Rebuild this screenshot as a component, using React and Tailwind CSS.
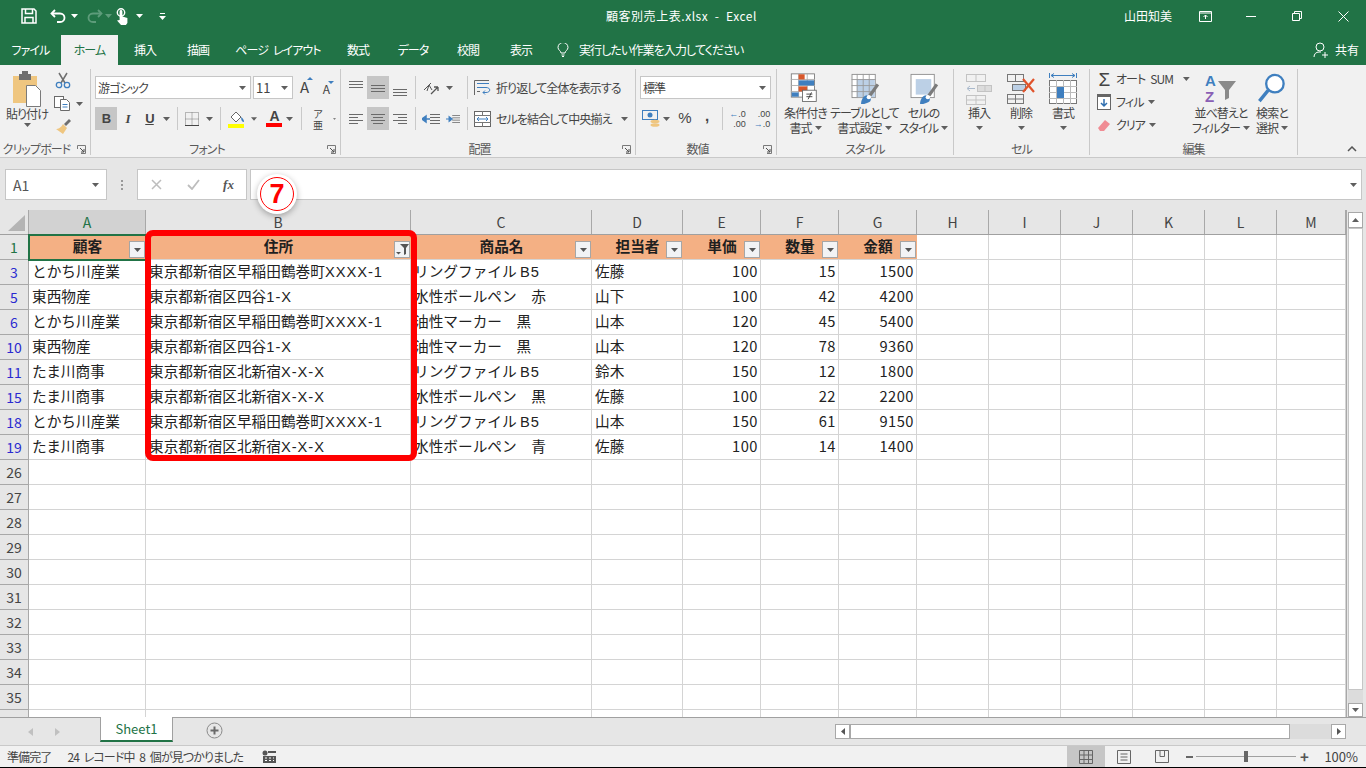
import React from "react";

const COLS = "grid grid-cols-[29px_117px_265px_181px_91px_78px_78px_78px_72px_72px_72px_72px_72px_69px]";
const LINE = "border-r border-b border-[#d4d4d4]";
const PALT = " [font-feature-settings:'palt'] tracking-[-0.9px] [word-spacing:3px] ";
const Car = ({ c = "#5f5f5f" }) => (
  <svg width="7" height="4" viewBox="0 0 7 4"><path d="M0 0h7L3.5 4z" fill={c} /></svg>
);
const S = ({ c = "", children }) => <div className={"flex items-center justify-center shrink-0 h-full " + c}>{children}</div>;
const Sep = ({ c = "h-[23px]" }) => <div className={"w-px shrink-0 bg-[#c9c9c9] " + c} />;

const Launcher = () => (
  <div className="w-[17px] shrink-0 flex items-center justify-center">
    <svg width="9" height="9" viewBox="0 0 9 9" fill="none" stroke="#7a7a7a"><path d="M.5 4V.5H8.500V8.500H4" /><path d="M3 3l4 4M7 4v3H4" stroke="#4f4f4f" /></svg>
  </div>
);

const Group = ({ w, label, launcher, children }) => (
  <div className={"flex flex-col h-[86px] shrink-0 border-r border-[#c9c9c9] " + w}>
    <div className="flex-1 min-h-0">{children}</div>
    <div className="flex h-[12px] items-center text-[12px] leading-none text-[#5a5a5a]">
      <div className="flex-1 text-center whitespace-nowrap">{label}</div>
      {launcher && <Launcher />}
    </div>
  </div>
);

const Lines = ({ ys, xs }) => (
  <svg width="16" height="16" viewBox="0 0 16 16" stroke="#6a6a6a" fill="none">
    {ys.map((y, i) => <path key={i} d={`M${xs[i][0]} ${y + .5}H${xs[i][1]}`} />)}
  </svg>
);
const full = [[1, 15], [1, 15], [1, 15]];
const AlignV = ({ top }) => <Lines ys={[top, top + 3, top + 6]} xs={full} />;
const AlignL = () => <Lines ys={[3, 6, 9, 12]} xs={[[1, 15], [1, 10], [1, 15], [1, 10]]} />;
const AlignC = () => <Lines ys={[3, 6, 9, 12]} xs={[[1, 15], [3, 13], [1, 15], [3, 13]]} />;
const AlignR = () => <Lines ys={[3, 6, 9, 12]} xs={[[1, 15], [6, 15], [1, 15], [6, 15]]} />;
const Indent = ({ flip }) => (
  <svg width="18" height="16" viewBox="0 0 18 16" fill="none">
    <path d="M8 3.500h10M8 6.500h10M8 9.500h10M8 12.500h10" stroke="#6a6a6a" />
    <path d={flip ? "M0 8h4M4 5l4 3-4 3z" : "M3 8h5M4 5L0 8l4 3z"} stroke="#3f7fbf" strokeWidth="1.500" fill="#3f7fbf" />
  </svg>
);

const BigBtn = ({ w, icon, l1, l2, caret = true }) => (
  <div className={"flex flex-col items-center shrink-0 mt-[3px] " + w}>
    <div className="h-[33px] flex items-center justify-center">{icon}</div>
    <div className="text-[12px] leading-[15px] text-[#444] whitespace-nowrap text-center">{l1}</div>
    <div className="text-[12px] leading-[15px] text-[#444] whitespace-nowrap flex items-center justify-center gap-[3px] h-[15px]">{l2}{caret && <Car />}</div>
  </div>
);

const CondIcon = () => (
  <svg width="31" height="33" viewBox="0 0 36 37" fill="none">
    <rect x="1.500" y="1.500" width="27" height="27" fill="#fff" stroke="#777" />
    <path d="M1 8h28M1 15h28M1 22h28M10 1v28M20 1v28" stroke="#aaa" />
    <rect x="10" y="2" width="7" height="6" fill="#d8572a" /><rect x="10" y="9" width="18" height="6" fill="#3f7fbf" />
    <rect x="10" y="16" width="10" height="6" fill="#d8572a" /><rect x="2" y="23" width="8" height="5" fill="#3f7fbf" />
    <rect x="14.500" y="20.500" width="16" height="13" fill="#fff" stroke="#666" />
    <path d="M19 25h7M19 28h7M25 23l-4 8" stroke="#333" />
  </svg>
);
const Brush = () => (
  <>
    <path d="M22 26l10-14 3 2-9 13z" fill="#7b7b7b" />
    <path d="M14 36c0-6 4-11 8-10 3 1 4 4 3 6-1 2-6 4-11 4z" fill="#3f7fbf" />
    <circle cx="23" cy="28" r="2.500" fill="#fff" />
  </>
);
const TableIcon = () => (
  <svg width="31" height="32" viewBox="0 0 36 37" fill="none">
    <rect x="3.500" y="1.500" width="27" height="27" fill="#fff" stroke="#888" />
    <rect x="9" y="7" width="21" height="21" fill="#bcd0e6" />
    <path d="M3 7.500h28M3 14.500h28M3 21.500h28M9.500 1v28M16.500 1v28M23.500 1v28" stroke="#999" />
    <Brush />
  </svg>
);
const StyleIcon = () => (
  <svg width="31" height="32" viewBox="0 0 36 37" fill="none">
    <rect x="3.500" y="1.500" width="27" height="27" fill="#fff" stroke="#888" />
    <rect x="9" y="7" width="18" height="18" fill="#bcd0e6" />
    <Brush />
  </svg>
);
const InsertIcon = () => (
  <svg width="28" height="32" viewBox="0 0 28 32" fill="none" stroke="#c3c3c3">
    <rect x="1.500" y="1.500" width="19" height="7" /><path d="M11 1v8" />
    <rect x="1.500" y="22.500" width="19" height="9" /><path d="M11 22v10M1 27h20" />
    <rect x="12.500" y="12.500" width="14" height="6" fill="#dcdcdc" /><path d="M20 12v7" />
    <path d="M10 15.500H3M5 13l-3 2.500L5 18" stroke="#a9b9cc" />
  </svg>
);
const DeleteIcon = () => (
  <svg width="30" height="32" viewBox="0 0 30 32" fill="none">
    <rect x="1.500" y="1.500" width="16" height="7" stroke="#777" /><path d="M9.500 1v8" stroke="#777" />
    <rect x="1.500" y="21.500" width="16" height="9" stroke="#777" /><path d="M9.500 21v10M1 26h17" stroke="#777" />
    <rect x="6.500" y="11.500" width="13" height="6" fill="#bcd0e6" stroke="#777" />
    <path d="M17 6l11 13M28 6L17 19" stroke="#e0532b" strokeWidth="2.200" />
  </svg>
);
const FormatIcon = () => (
  <svg width="30" height="33" viewBox="0 0 30 33" fill="none">
    <path d="M1.500 1v5M28.500 1v5M3 3.500h24M3 3.500L6 1.500M3 3.500L6 5.500M27 3.500l-3-2M27 3.500l-3 2" stroke="#3f7fbf" />
    <rect x="1.500" y="8.500" width="27" height="23" fill="#fff" stroke="#777" />
    <path d="M1 14.500h28M1 20.500h28M1 26.500h28M8.500 8v24M15.500 8v24M22.500 8v24" stroke="#bbb" />
    <rect x="9" y="15" width="7" height="11" fill="#3f7fbf" />
  </svg>
);
const SortIcon = () => (
  <svg width="34" height="36" viewBox="0 0 34 36" fill="none" className="font-['Liberation_Sans',sans-serif]">
    <text x="1" y="15" fontSize="15" fontWeight="700" fill="#3f7fbf">A</text>
    <text x="1" y="31" fontSize="15" fontWeight="700" fill="#8a5fb5">Z</text>
    <path d="M14 10h18l-7 9v8l-4 2V19z" fill="#8a8a8a" />
  </svg>
);
const FindIcon = () => (
  <svg width="30" height="33" viewBox="0 0 30 34" fill="none">
    <circle cx="18" cy="12" r="9" stroke="#3f7fbf" strokeWidth="2.400" fill="#fff" />
    <path d="M11 19L2 30" stroke="#3f7fbf" strokeWidth="3.500" />
  </svg>
);

const Ribbon = () => (
  <div className={"h-[93px] bg-[#f1f1f1] border-b border-[#c9c9c9] pt-[4px] flex items-start text-[#444]" + PALT}>
    <Group w="w-[91px]" label="クリップボード" launcher>
      <div className="flex">
        <div className="w-[54px] flex flex-col items-center pt-[2px]">
          <svg width="32" height="36" viewBox="0 0 32 36" fill="none">
            <rect x="2" y="5" width="24" height="27" fill="#efc680" />
            <rect x="8" y="3" width="12" height="6" fill="#6f6f6f" /><rect x="11" y="0" width="6" height="4" fill="#6f6f6f" />
            <path d="M15.500 14.500h9l5 5v16h-14z" fill="#fff" stroke="#7a7a7a" />
          </svg>
          <div className="text-[12px] leading-[15px] whitespace-nowrap mt-[-1px]">貼り付け</div>
          <div className="mt-[2px] leading-none flex"><Car /></div>
        </div>
        <div className="flex flex-col">
          <div className="h-[23px] flex items-center pl-[1px]">
            <svg width="16" height="17" viewBox="0 0 16 17" fill="none"><path d="M4 1l6 10M12 1L6 11" stroke="#6f6f6f" strokeWidth="1.500" /><circle cx="4" cy="13" r="2.700" stroke="#3f7fbf" strokeWidth="1.300" /><circle cx="12" cy="13" r="2.700" stroke="#3f7fbf" strokeWidth="1.300" /></svg>
          </div>
          <div className="h-[23px] flex items-center gap-[5px]">
            <svg width="17" height="15" viewBox="0 0 17 15" fill="#fff" stroke="#6a6a6a"><rect x=".5" y=".5" width="9" height="11" /><path d="M6.500 3.500h6l3 3v8h-9z" /><path d="M8.500 8.500h5M8.500 11h5" stroke="#3f7fbf" /></svg>
            <Car />
          </div>
          <div className="h-[23px] flex items-center pl-[1px]">
            <svg width="16" height="16" viewBox="0 0 16 16"><path d="M9 5l5-5 2 2-5 5z" fill="#6f6f6f" /><path d="M8 5l4 4-4 6-7-5c2 0 5-1 7-5z" fill="#efc680" /></svg>
          </div>
        </div>
      </div>
    </Group>

    <Group w="w-[250px]" label="フォント" launcher>
      <div className="pt-[7px] pl-[4px]">
        <div className="flex h-[23px] items-center">
          <div className="w-[156px] h-full bg-white border border-[#c6c6c6] flex items-center justify-between pl-[2px] pr-[4px] text-[12px] leading-none">游ゴシック<Car /></div>
          <div className="w-[40px] ml-[2px] h-full bg-white border border-[#c6c6c6] flex items-center justify-between pl-[2px] pr-[4px] text-[13px] leading-none tracking-normal">11<Car /></div>
          <S c="w-[22px] text-[15px]"><span className="relative">A<span className="absolute -right-[5px] top-[1px] w-0 h-0 border-x-[3px] border-x-transparent border-b-[3px] border-b-[#3f7fbf]" /></span></S>
          <S c="w-[22px] text-[12px]"><span className="relative mt-[2px]">A<span className="absolute -right-[5px] top-[1px] w-0 h-0 border-x-[3px] border-x-transparent border-t-[3px] border-t-[#3f7fbf]" /></span></S>
        </div>
        <div className="flex h-[23px] items-center mt-[8px]">
          <S c="w-[22px] bg-[#c6c6c6] text-[13px] font-bold font-['Liberation_Sans',sans-serif]">B</S>
          <S c="w-[21px] text-[13px] italic font-['Liberation_Serif',serif] font-bold">I</S>
          <S c="w-[23px] text-[13px] underline font-bold font-['Liberation_Sans',sans-serif]">U</S>
          <S c="w-[10px]"><Car /></S>
          <S c="w-[6px]" /><Sep />
          <S c="w-[28px]">
            <svg width="14" height="14" viewBox="0 0 14 14" fill="none"><path d="M.5 .5h13v13H.5zM7 .5v13M.5 7h13" stroke="#7a7a7a" strokeDasharray="1 1" /><path d="M0 13.500h14" stroke="#444" /></svg>
          </S>
          <S c="w-[7px]"><Car /></S>
          <S c="w-[7px]" /><Sep />
          <S c="w-[30px]">
            <svg width="17" height="18" viewBox="0 0 17 18" fill="none"><path d="M3 7l5-5 5 5-5 5z" fill="#fff" stroke="#666" /><path d="M13 7c2 1 3 3 3 5-2 0-3-2-3-5z" fill="#3f7fbf" /><rect x="0" y="14" width="16" height="4" fill="#ffff00" /></svg>
          </S>
          <S c="w-[6px]"><Car /></S>
          <S c="w-[6px]" />
          <S c="w-[22px]">
            <div className="flex flex-col items-center"><span className="text-[14px] leading-[13px] font-['Liberation_Sans',sans-serif] font-bold">A</span><span className="w-[16px] h-[4px] bg-[#ff0000]" /></div>
          </S>
          <S c="w-[8px]"><Car /></S>
          <S c="w-[8px]" /><Sep />
          <S c="w-[31px]"><span className="text-[10px] leading-[11px] text-center">ア<br />亜</span></S>
          <S c="w-[3px]"><Car /></S>
        </div>
      </div>
    </Group>

    <Group w="w-[295px]" label="配置" launcher>
      <div className="pt-[7px] pl-[4px]">
        <div className="flex h-[23px] items-center">
          <S c="w-[22px]"><AlignV top={1} /></S>
          <S c="w-[22px] bg-[#c6c6c6]"><AlignV top={5} /></S>
          <S c="w-[22px]"><AlignV top={9} /></S>
          <S c="w-[4px]" /><Sep />
          <S c="w-[30px]">
            <svg width="18" height="16" viewBox="0 0 18 16" fill="none" stroke="#555"><path d="M2 10l7-7M5 11l2-6 3 5" /><path d="M9 14l7-7M16 7h-4M16 7v4" strokeWidth="1.300" /></svg>
          </S>
          <S c="w-[7px]"><Car /></S>
          <S c="w-[14px]" /><Sep />
          <S c="w-[28px] pl-[2px]">
            <svg width="18" height="16" viewBox="0 0 18 16" fill="none"><path d="M.5 15V.5H15" stroke="#666" /><path d="M3 3.500h12M3 7.500h9c5 0 5 5 0 5H9M11 10.500l-2 2 2 2" stroke="#3f7fbf" /><path d="M3 11.500h3" stroke="#666" /></svg>
          </S>
          <span className="text-[12px] leading-none whitespace-nowrap">折り返して全体を表示する</span>
        </div>
        <div className="flex h-[23px] items-center mt-[8px]">
          <S c="w-[22px]"><AlignL /></S>
          <S c="w-[22px] bg-[#c6c6c6]"><AlignC /></S>
          <S c="w-[22px]"><AlignR /></S>
          <S c="w-[4px]" /><Sep />
          <S c="w-[30px]"><Indent /></S>
          <S c="w-[14px]"><Indent flip /></S>
          <S c="w-[7px]" /><Sep />
          <S c="w-[28px] pl-[2px]">
            <svg width="18" height="16" viewBox="0 0 18 16" fill="none"><rect x=".5" y=".5" width="16" height="15" stroke="#666" fill="#fff" /><path d="M0 4.500h17M0 11.500h17M8.500 0v4M8.500 12v4" stroke="#777" /><path d="M3 8h11M5 6L3 8l2 2M12 6l2 2-2 2" stroke="#3f7fbf" /></svg>
          </S>
          <span className="text-[12px] leading-none whitespace-nowrap w-[125px]">セルを結合して中央揃え</span>
          <Car />
        </div>
      </div>
    </Group>

    <Group w="w-[141px]" label="数値" launcher>
      <div className="pt-[7px] pl-[4px]">
        <div className="w-[131px] h-[23px] bg-white border border-[#c6c6c6] flex items-center justify-between pl-[2px] pr-[4px] text-[12px] leading-none">標準<Car /></div>
        <div className="flex h-[23px] items-center mt-[8px] tracking-normal">
          <S c="w-[22px]">
            <svg width="18" height="17" viewBox="0 0 18 17" fill="none"><rect x=".5" y=".5" width="15" height="9" stroke="#3f7fbf" /><circle cx="8" cy="5" r="2.500" fill="#3f7fbf" /><ellipse cx="13" cy="11.500" rx="4.500" ry="1.800" fill="#efc680" /><ellipse cx="13" cy="15" rx="4.500" ry="1.800" fill="#efc680" /></svg>
          </S>
          <S c="w-[9px]"><Car /></S>
          <S c="w-[28px] text-[15px] font-['Liberation_Sans',sans-serif]">%</S>
          <S c="w-[16px] text-[15px] font-bold font-['Liberation_Sans',sans-serif]"><span className="-mt-[4px]">,</span></S>
          <S c="w-[7px]" /><Sep />
          <S c="w-[29px]"><span className="relative text-[9px] leading-[10px] text-right font-['Liberation_Sans',sans-serif]"><span className="text-[#3f7fbf]">←</span>.0<br />.00</span></S>
          <S c="w-[20px]"><span className="relative text-[9px] leading-[10px] text-right font-['Liberation_Sans',sans-serif]">.00<br /><span className="text-[#3f7fbf]">→</span>.0</span></S>
        </div>
      </div>
    </Group>

    <Group w="w-[177px]" label="スタイル">
      <div className="flex pl-[1px]">
        <BigBtn w="w-[55px]" icon={<CondIcon />} l1="条件付き" l2="書式" />
        <BigBtn w="w-[63px]" icon={<TableIcon />} l1="テーブルとして" l2="書式設定" />
        <BigBtn w="w-[55px]" icon={<StyleIcon />} l1="セルの" l2="スタイル" />
      </div>
    </Group>

    <Group w="w-[136px]" label="セル">
      <div className="flex pl-[4px]">
        <BigBtn w="w-[42px]" icon={<InsertIcon />} l1="挿入" l2="" />
        <BigBtn w="w-[42px]" icon={<DeleteIcon />} l1="削除" l2="" />
        <BigBtn w="w-[42px]" icon={<FormatIcon />} l1="書式" l2="" />
      </div>
    </Group>

    <Group w="w-[208px]" label="編集">
      <div className="flex pl-[4px]">
        <div className="w-[96px] flex flex-col gap-[3px] text-[12px] leading-none">
          <div className="flex items-center h-[20px]">
            <S c="w-[20px] text-[19px] font-['Liberation_Sans',sans-serif]">Σ</S>
            <span className="ml-[2px] w-[70px] whitespace-nowrap">オート SUM</span><Car />
          </div>
          <div className="flex items-center h-[20px]">
            <S c="w-[20px]">
              <svg width="15" height="16" viewBox="0 0 15 16" fill="none"><rect x=".5" y=".5" width="13" height="15" stroke="#666" fill="#fff" /><rect x="0" y="0" width="14" height="3" fill="#666" /><path d="M7 5v7M4 9l3 3 3-3" stroke="#2f6fb0" strokeWidth="1.500" /></svg>
            </S>
            <span className="ml-[2px] mr-[4px]">フィル</span><Car />
          </div>
          <div className="flex items-center h-[20px]">
            <S c="w-[20px]">
              <svg width="14" height="13" viewBox="0 0 14 13"><path d="M8 1l5 4-6 7H3L1 9z" fill="#f08c94" /></svg>
            </S>
            <span className="ml-[2px] mr-[4px]">クリア</span><Car />
          </div>
        </div>
        <BigBtn w="w-[62px]" icon={<SortIcon />} l1="並べ替えと" l2="フィルター" />
        <BigBtn w="w-[40px]" icon={<FindIcon />} l1="検索と" l2="選択" />
      </div>
    </Group>

    <div className="flex-1 h-[85px] flex items-end justify-end pr-[9px] pb-[2px]">
      <svg width="10" height="6" viewBox="0 0 10 6" fill="none" stroke="#555" strokeWidth="1.500"><path d="M1 5l4-4 4 4" /></svg>
    </div>
  </div>
);

const Filter = ({ on }) => (
  <span className="absolute right-[1px] bottom-[1px] w-[16px] h-[17px] bg-[#f2f3f5] border border-[#a6a6a6] flex items-center justify-center">
    {on ? (
      <svg width="13" height="11" viewBox="0 0 13 11"><path d="M4 0h9L10 4v6L8 11V4z" fill="#555" /><path d="M0 8h5l-2.500 2.500z" fill="#555" /></svg>
    ) : <Car c="#555" />}
  </span>
);

const L = ({ children }) => <span className="font-['Liberation_Sans',sans-serif] tracking-[1px]">{children}</span>;
const ADDR1 = <>東京都新宿区早稲田鶴巻町<L>XXXX-1</L></>;
const ADDR2 = <>東京都新宿区四谷<L>1-X</L></>;
const ADDR3 = <>東京都新宿区北新宿<L>X-X-X</L></>;
const RF = <>リングファイル <L>B5</L></>;
const DATA = [
  [3, "とかち川産業", ADDR1, RF, "佐藤", 100, 15, 1500],
  [5, "東西物産", ADDR2, "水性ボールペン　赤", "山下", 100, 42, 4200],
  [6, "とかち川産業", ADDR1, "油性マーカー　黒", "山本", 120, 45, 5400],
  [10, "東西物産", ADDR2, "油性マーカー　黒", "山本", 120, 78, 9360],
  [11, "たま川商事", ADDR3, RF, "鈴木", 150, 12, 1800],
  [15, "たま川商事", ADDR3, "水性ボールペン　黒", "佐藤", 100, 22, 2200],
  [18, "とかち川産業", ADDR1, RF, "山本", 150, 61, 9150],
  [19, "たま川商事", ADDR3, "水性ボールペン　青", "佐藤", 100, 14, 1400],
];
const RowHead = ({ c, children }) => (
  <div className={"h-[25px] pb-[1px] flex items-center justify-center text-[14px] leading-none border-r border-b border-[#a8a8a8] bg-[#e6e6e6] " + c}>{children}</div>
);
const TextCell = ({ children }) => <div className={"h-[25px] pb-[1px] pl-[3px] flex items-center overflow-hidden whitespace-pre " + LINE}><span>{children}</span></div>;
const NumCell = ({ children }) => <div className={"h-[25px] pb-[1px] pr-[2px] flex items-center justify-end overflow-hidden tracking-[0.5px] " + LINE}>{children}</div>;
const Head = ({ children, on }) => (
  <div className="relative h-[25px] pb-[1px] bg-[#f4b084] flex items-center justify-center font-bold text-[#1f1f1f] border-b border-[#d4d4d4]">
    {children}<Filter on={on} />
  </div>
);

const Sheet = () => (
  <div className="flex h-[507px] bg-white">
    <div className="w-[1346px] shrink-0 overflow-hidden text-[14.67px] leading-none text-[#222]">
      <div className={COLS + " h-[25px] pb-0 bg-[#e6e6e6] text-[14px] leading-none text-[#444] border-b border-[#a0a0a0]"}>
        <div className="relative border-r border-[#a8a8a8]">
          <span className="absolute left-[8px] top-[5px] w-0 h-0 border-l-[17px] border-l-transparent border-b-[16px] border-b-[#b4b4b4]" />
        </div>
        {"ABCDEFGHIJKLM".split("").map((l, i) => (
          <div key={l} className={"flex items-center justify-center pb-[1px] border-r border-[#a8a8a8] " + (i === 0 ? "bg-[#d2d2d2] text-[#217346]" : "")}>{l}</div>
        ))}
      </div>
      <div className={COLS}>
        <RowHead c="bg-[#d2d2d2] text-[#217346]">1</RowHead>
        <div className="relative">
          <Head>顧客</Head>
          <span className="absolute -left-[1px] -top-[1px] -right-[1px] bottom-[-1px] border-2 border-[#217346]" />
        </div>
        <Head on>住所</Head><Head>商品名</Head><Head>担当者</Head><Head>単価</Head><Head>数量</Head><Head>金額</Head>
        {[0, 1, 2, 3, 4, 5].map(i => <div key={i} className={"h-[25px] " + LINE} />)}
      </div>
      {DATA.map(r => (
        <div key={r[0]} className={COLS}>
          <RowHead c="text-[#2a2ad0]">{r[0]}</RowHead>
          <TextCell>{r[1]}</TextCell><TextCell>{r[2]}</TextCell><TextCell>{r[3]}</TextCell><TextCell>{r[4]}</TextCell>
          <NumCell>{r[5]}</NumCell><NumCell>{r[6]}</NumCell><NumCell>{r[7]}</NumCell>
          {[0, 1, 2, 3, 4, 5].map(i => <div key={i} className={"h-[25px] " + LINE} />)}
        </div>
      ))}
      {[26, 27, 28, 29, 30, 31, 32, 33, 34, 35, 36].map(n => (
        <div key={n} className={COLS}>
          <RowHead c="text-[#444]">{n}</RowHead>
          {Array.from({ length: 13 }).map((_, i) => <div key={i} className={"h-[25px] " + LINE} />)}
        </div>
      ))}
    </div>
    <div className="flex-1 bg-[#e6e6e6] border-l border-[#a8a8a8] flex flex-col items-center pt-[2px] pr-[2px]">
      <div className="w-[15px] h-[16px] bg-white border border-[#a8a8a8] flex items-center justify-center rotate-180"><Car /></div>
      <div className="w-[15px] h-[462px] bg-white border border-[#c6c6c6]" />
      <div className="flex-1 w-[15px] bg-[#dcdcdc]" />
      <div className="w-[15px] h-[14px] bg-white border border-[#a8a8a8] flex items-center justify-center"><Car /></div>
    </div>
  </div>
);

const Bottom = () => (
  <>
    <div className="h-[28px] bg-[#e6e6e6] border-t border-[#a0a0a0] flex text-[#444]">
      <div className="w-[100px] flex items-center justify-center gap-[22px] pr-[12px] text-[#bbb]">
        <svg width="5" height="8" viewBox="0 0 5 8"><path d="M5 0v8L0 4z" fill="#c0c0c0" /></svg>
        <svg width="5" height="8" viewBox="0 0 5 8"><path d="M0 0v8l5-4z" fill="#c0c0c0" /></svg>
      </div>
      <div className="w-[73px] h-[25px] -mt-px bg-white border-x border-[#a0a0a0] border-b-2 border-b-[#217346] flex items-center justify-center text-[13px] leading-none text-[#217346]">Sheet1</div>
      <div className="w-[83px] flex items-center justify-center pr-[1px] pb-[3px]">
        <svg width="17" height="17" viewBox="0 0 17 17" fill="none"><circle cx="8.500" cy="8.500" r="7.500" stroke="#8a8a8a" /><path d="M8.500 4.500v8M4.500 8.500h8" stroke="#6a6a6a" strokeWidth="2" /></svg>
      </div>
      <div className="flex-1" />
      <div className="flex items-start pt-[6px] pr-[20px] h-full">
        <div className="w-[15px] h-[15px] bg-white border border-[#a8a8a8] flex items-center justify-center"><svg width="4" height="7" viewBox="0 0 4 7"><path d="M4 0v7L0 3.500z" fill="#555" /></svg></div>
        <div className="w-[440px] h-[15px] bg-white border border-[#a8a8a8]" />
        <div className="w-[41px] h-[15px] bg-[#dcdcdc]" />
        <div className="w-[15px] h-[15px] bg-white border border-[#a8a8a8] flex items-center justify-center"><svg width="4" height="7" viewBox="0 0 4 7"><path d="M0 0v7l4-3.500z" fill="#555" /></svg></div>
      </div>
    </div>
    <div className={"h-[22px] bg-[#f1f1f1] border-t border-[#c9c9c9] flex items-center text-[12px] leading-none text-[#444]" + PALT}>
      <span className="ml-[7px]">準備完了</span>
      <span className="ml-[16px] whitespace-nowrap">24 レコード中 8 個が見つかりました</span>
      <span className="ml-[19px]">
        <svg width="14" height="13" viewBox="0 0 14 13"><circle cx="3" cy="3" r="2.500" fill="#555" /><path d="M6 1h8v2H6zM1 6h13v7H1z" fill="#555" /><path d="M3 8h2M7 8h2M11 8h1M3 10.500h2M7 10.500h2M11 10.500h1" stroke="#fff" /></svg>
      </span>
      <div className="flex-1" />
      <S c="w-[38px] bg-[#c6c6c6]">
        <svg width="14" height="14" viewBox="0 0 14 14" fill="none" stroke="#666"><path d="M.5 .5h13v13H.5zM.5 5h13M.5 9.500h13M5 .5v13M9.500 .5v13" /></svg>
      </S>
      <S c="w-[38px]">
        <svg width="14" height="14" viewBox="0 0 14 14" fill="none" stroke="#666"><path d="M.5 .5h13v13H.5zM3.500 4h7M3.500 7h7M3.500 10h7" /></svg>
      </S>
      <S c="w-[38px]">
        <svg width="14" height="13" viewBox="0 0 14 13" fill="none" stroke="#666"><path d="M.5 .5h13v12H.5zM5 .5v6h4.500v-6" /></svg>
      </S>
      <S c="w-[4px]" />
      <S c="w-[9px]"><span className="w-[7px] h-[2px] bg-[#666]" /></S>
      <div className="w-[100px] ml-[2px] flex items-center justify-center relative h-full">
        <span className="w-full h-px bg-[#a0a0a0]" />
        <span className="absolute w-[4px] h-[11px] bg-[#666]" />
      </div>
      <S c="w-[11px] ml-[2px] text-[15px] text-[#555] font-bold">+</S>
      <span className="ml-[15px] mr-[8px] whitespace-nowrap text-[13px] tracking-normal">100%</span>
    </div>
    <div className="h-px bg-black" />
  </>
);

export default function App() {
  const tabs = [["w-[61px]", "ファイル"], ["w-[57px]", "ホーム"], ["w-[54px]", "挿入"], ["w-[52px]", "描画"], ["w-[108px]", "ページ レイアウト"], ["w-[52px]", "数式"], ["w-[58px]", "データ"], ["w-[52px]", "校閲"], ["w-[54px]", "表示"]];
  return (
    <div className="relative w-[1366px] h-[768px] overflow-hidden font-['Noto_Sans_CJK_JP','Noto_Sans',sans-serif] bg-[#e6e6e6]">
      <div className="h-[35px] pb-[3px] bg-[#217346] grid grid-cols-[1fr_auto_1fr] items-center text-white text-[12px] leading-none">
        <div className="flex items-center h-full pl-[21px]">
          <svg width="16" height="16" viewBox="0 0 16 16" fill="none" stroke="#fff" strokeWidth="1.500"><path d="M1 1h12l2 2v12H1z" /><path d="M4.500 1v4.500h7V1M4 15V9.500h8V15" /></svg>
          <S c="w-[13px]" />
          <svg width="17" height="14" viewBox="0 0 17 14" fill="none" stroke="#fff" strokeWidth="1.800"><path d="M5 1L1.500 4.500 5 8" /><path d="M2 4.500h8c6 0 6 8.500 0 8.500H7" /></svg>
          <S c="w-[14px]"><Car c="#fff" /></S>
          <S c="w-[5px]" />
          <svg width="17" height="14" viewBox="0 0 17 14" fill="none" stroke="#5d9c7a" strokeWidth="1.800"><path d="M12 1l3.500 3.500L12 8" /><path d="M15 4.500H7c-6 0-6 8.500 0 8.500h3" /></svg>
          <S c="w-[11px]"><Car c="#5d9c7a" /></S>
          <S c="w-[2px]" />
          <svg width="13" height="17" viewBox="0 0 13 17" fill="none"><circle cx="5" cy="4.500" r="3.700" stroke="#fff" strokeWidth="1.400" /><path d="M3.600 3.500a1.400 1.400 0 0 1 2.800 0v5l5 1.500V15l-1.500 2H5L1 12.500l2.600-.5z" fill="#fff" /></svg>
          <S c="w-[20px]"><Car c="#fff" /></S>
          <S c="w-[10px]" />
          <svg width="7" height="7" viewBox="0 0 7 7" fill="#fff"><path d="M1 0h5v1H1zM0 3h7L3.500 7z" /></svg>
        </div>
        <div className="whitespace-pre -ml-[3px] tracking-[0.55px]">顧客別売上表.xlsx  -  Excel</div>
        <div className="flex items-center justify-end h-full">
          <span className="mr-[10px]">山田知美</span>
          <S c="w-[46px]"><svg width="13" height="11" viewBox="0 0 13 11" fill="none" stroke="#fff"><path d="M.5 .5h12v10H.5zM.5 2h12M6.500 8V4M4.500 6l2-2 2 2" /></svg></S>
          <S c="w-[46px]"><span className="w-[10px] h-px bg-white" /></S>
          <S c="w-[46px]"><svg width="10" height="10" viewBox="0 0 10 10" fill="none" stroke="#fff"><path d="M.5 2.500h7v7h-7zM2.500 2.500v-2h7v7h-2" /></svg></S>
          <S c="w-[46px]"><svg width="11" height="11" viewBox="0 0 11 11" fill="none" stroke="#fff"><path d="M.5 .5l10 10M10.500 .5l-10 10" /></svg></S>
        </div>
      </div>

      <div className={"h-[30px] bg-[#217346] flex text-[12px] leading-none text-white" + PALT}>
        {tabs.map(([w, t], i) => (
          <div key={t} className={"flex items-center justify-center whitespace-nowrap pb-[1px] " + w + (i === 1 ? " bg-[#f1f1f1] text-[#217346]" : "")}>{t}</div>
        ))}
        <div className="flex items-center ml-[9px]">
          <svg width="12" height="14" viewBox="0 0 12 14" fill="none" stroke="#fff"><path d="M4 10c0-2-3-3-3-5.500a5 5 0 0 1 10 0C11 7 8 8 8 10zM4.500 12h3M5 13.500h2" /></svg>
          <span className="ml-[10px] whitespace-nowrap">実行したい作業を入力してください</span>
        </div>
        <div className="flex-1" />
        <div className="flex items-center pr-[7px] tracking-normal">
          <svg width="16" height="16" viewBox="0 0 16 16" fill="none" stroke="#fff"><circle cx="7" cy="5" r="4" /><path d="M1 15c0-3 2-5 5-5h2M12 10v6M9 13h6" /></svg>
          <span className="ml-[6px]">共有</span>
        </div>
      </div>

      <Ribbon />

      <div className="h-[52px] bg-[#e6e6e6] flex items-start pt-[11px] text-[#555]">
        <div className="ml-[5px] w-[102px] h-[31px] bg-white border border-[#c6c6c6] flex items-center justify-between pl-[7px] pr-[7px] text-[14px] leading-none">A1<Car /></div>
        <div className="w-[30px] h-[31px] flex flex-col items-center justify-center gap-[2px]">
          <span className="w-[2px] h-[2px] bg-[#999]" /><span className="w-[2px] h-[2px] bg-[#999]" /><span className="w-[2px] h-[2px] bg-[#999]" />
        </div>
        <div className="w-[110px] h-[31px] bg-white border border-[#c6c6c6] flex items-center">
          <S c="w-[37px]"><svg width="11" height="11" viewBox="0 0 11 11" fill="none" stroke="#bdbdbd" strokeWidth="1.500"><path d="M1 1l9 9M10 1l-9 9" /></svg></S>
          <S c="w-[37px]"><svg width="13" height="11" viewBox="0 0 13 11" fill="none" stroke="#bdbdbd" strokeWidth="1.800"><path d="M1 6l4 4 7-9" /></svg></S>
          <S c="w-[33px] italic text-[13px] font-['Liberation_Serif',serif] text-[#555] font-bold">fx</S>
        </div>
        <div className="ml-[3px] w-[1112px] h-[31px] bg-white border border-[#c6c6c6] flex items-center justify-end pr-[4px]"><Car /></div>
      </div>

      <Sheet />
      <Bottom />

      <div className="absolute left-[145px] top-[230px] w-[272px] h-[231px] border-[6px] border-[#ff0000] rounded-[8px]" />
      <div className="absolute left-[257px] top-[174px] w-[40px] h-[40px] rounded-full bg-white shadow-[0_2px_6px_rgba(0,0,0,0.3)] flex items-center justify-center">
        <div className="w-[34px] h-[34px] rounded-full border-[1.5px] border-[#ff0000] flex items-center justify-center text-[#ff0000] text-[27px] leading-none font-bold font-['Liberation_Sans',sans-serif]">7</div>
      </div>
    </div>
  );
}
